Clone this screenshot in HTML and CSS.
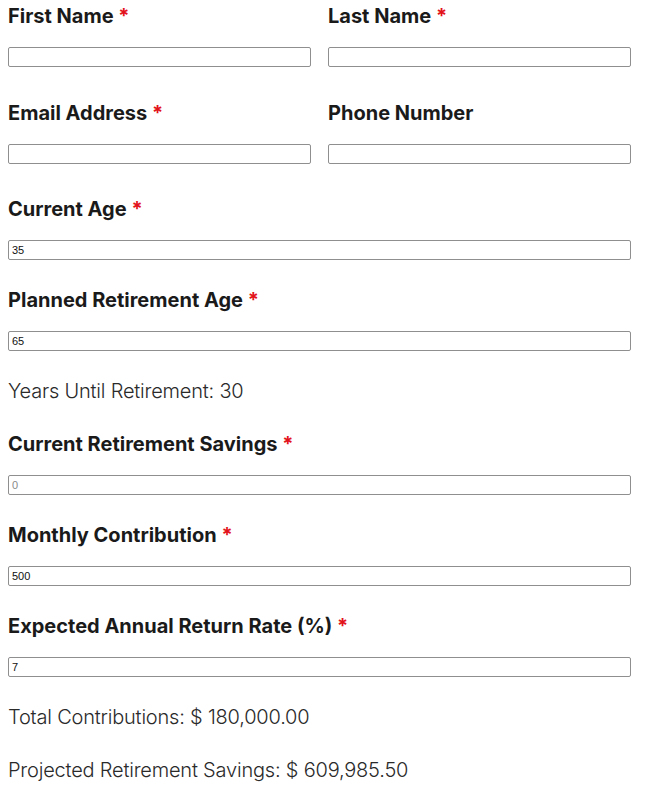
FILE: index.html
```html
<!DOCTYPE html>
<html lang="en">
<head>
    <meta charset="UTF-8">
    <meta name="viewport" content="width=device-width, initial-scale=1.0">
    <title>Retirement Calculator</title>
    <link rel="stylesheet" href="styles.css">
</head>
<body>
    <form class="calc">
        <div class="two-col">
            <div class="field">
                <label for="firstName">First Name <span class="req">*</span></label>
                <input type="text" id="firstName">
            </div>
            <div class="field">
                <label for="lastName">Last Name <span class="req">*</span></label>
                <input type="text" id="lastName">
            </div>
        </div>

        <div class="two-col">
            <div class="field">
                <label for="email">Email Address <span class="req">*</span></label>
                <input type="email" id="email">
            </div>
            <div class="field">
                <label for="phone">Phone Number</label>
                <input type="tel" id="phone">
            </div>
        </div>

        <div class="field">
            <label for="currentAge">Current Age <span class="req">*</span></label>
            <input type="number" id="currentAge" value="35">
        </div>

        <div class="field">
            <label for="retireAge">Planned Retirement Age <span class="req">*</span></label>
            <input type="number" id="retireAge" value="65">
        </div>

        <p class="result">Years Until Retirement: 30</p>

        <div class="field">
            <label for="savings">Current Retirement Savings <span class="req">*</span></label>
            <input type="number" id="savings" placeholder="0">
        </div>

        <div class="field">
            <label for="monthly">Monthly Contribution <span class="req">*</span></label>
            <input type="number" id="monthly" value="500">
        </div>

        <div class="field">
            <label for="rate">Expected Annual Return Rate (%) <span class="req">*</span></label>
            <input type="number" id="rate" value="7">
        </div>

        <p class="result">Total Contributions: $ 180,000.00</p>
        <p class="result">Projected Retirement Savings: $ 609,985.50</p>
    </form>
</body>
</html>
```

FILE: styles.css
```css
/* page */
body {
    margin: 0 8px;
    padding-top: 4px;
    background: #ffffff;
    font-family: Inter, "Noto Sans", sans-serif;
    color: #1a1a1a;
}

.calc {
    width: 623px;
}

/* two fields side by side */
.two-col {
    display: grid;
    grid-template-columns: 1fr 1fr;
    column-gap: 17px;
    margin-bottom: 5.5px;
}

.field {
    margin-bottom: 28px;
}

.field label {
    display: block;
    font-size: 20px;
    font-weight: 700;
    line-height: 24px;
    margin-bottom: 19px;
    color: #1a1a1a;
}

.req {
    color: #e3131b;
}

.field input {
    display: block;
    box-sizing: border-box;
    width: 100%;
    height: 20px;
    padding: 1px 3px;
    border: 1px solid #8f8f8f;
    border-radius: 2px;
    font-family: "Liberation Sans", Arial, sans-serif;
    font-size: 11px;
    color: #111;
    background: #fff;
    -moz-appearance: textfield;
}

.field input::-webkit-outer-spin-button,
.field input::-webkit-inner-spin-button {
    -webkit-appearance: none;
    margin: 0;
}

.field input::placeholder {
    color: #8a8a8a;
}

/* computed values */
.result {
    margin: 0 0 29px;
    font-size: 20px;
    font-weight: 300;
    line-height: 24px;
    letter-spacing: -0.2px;
    color: #2a2a2a;
}
```
